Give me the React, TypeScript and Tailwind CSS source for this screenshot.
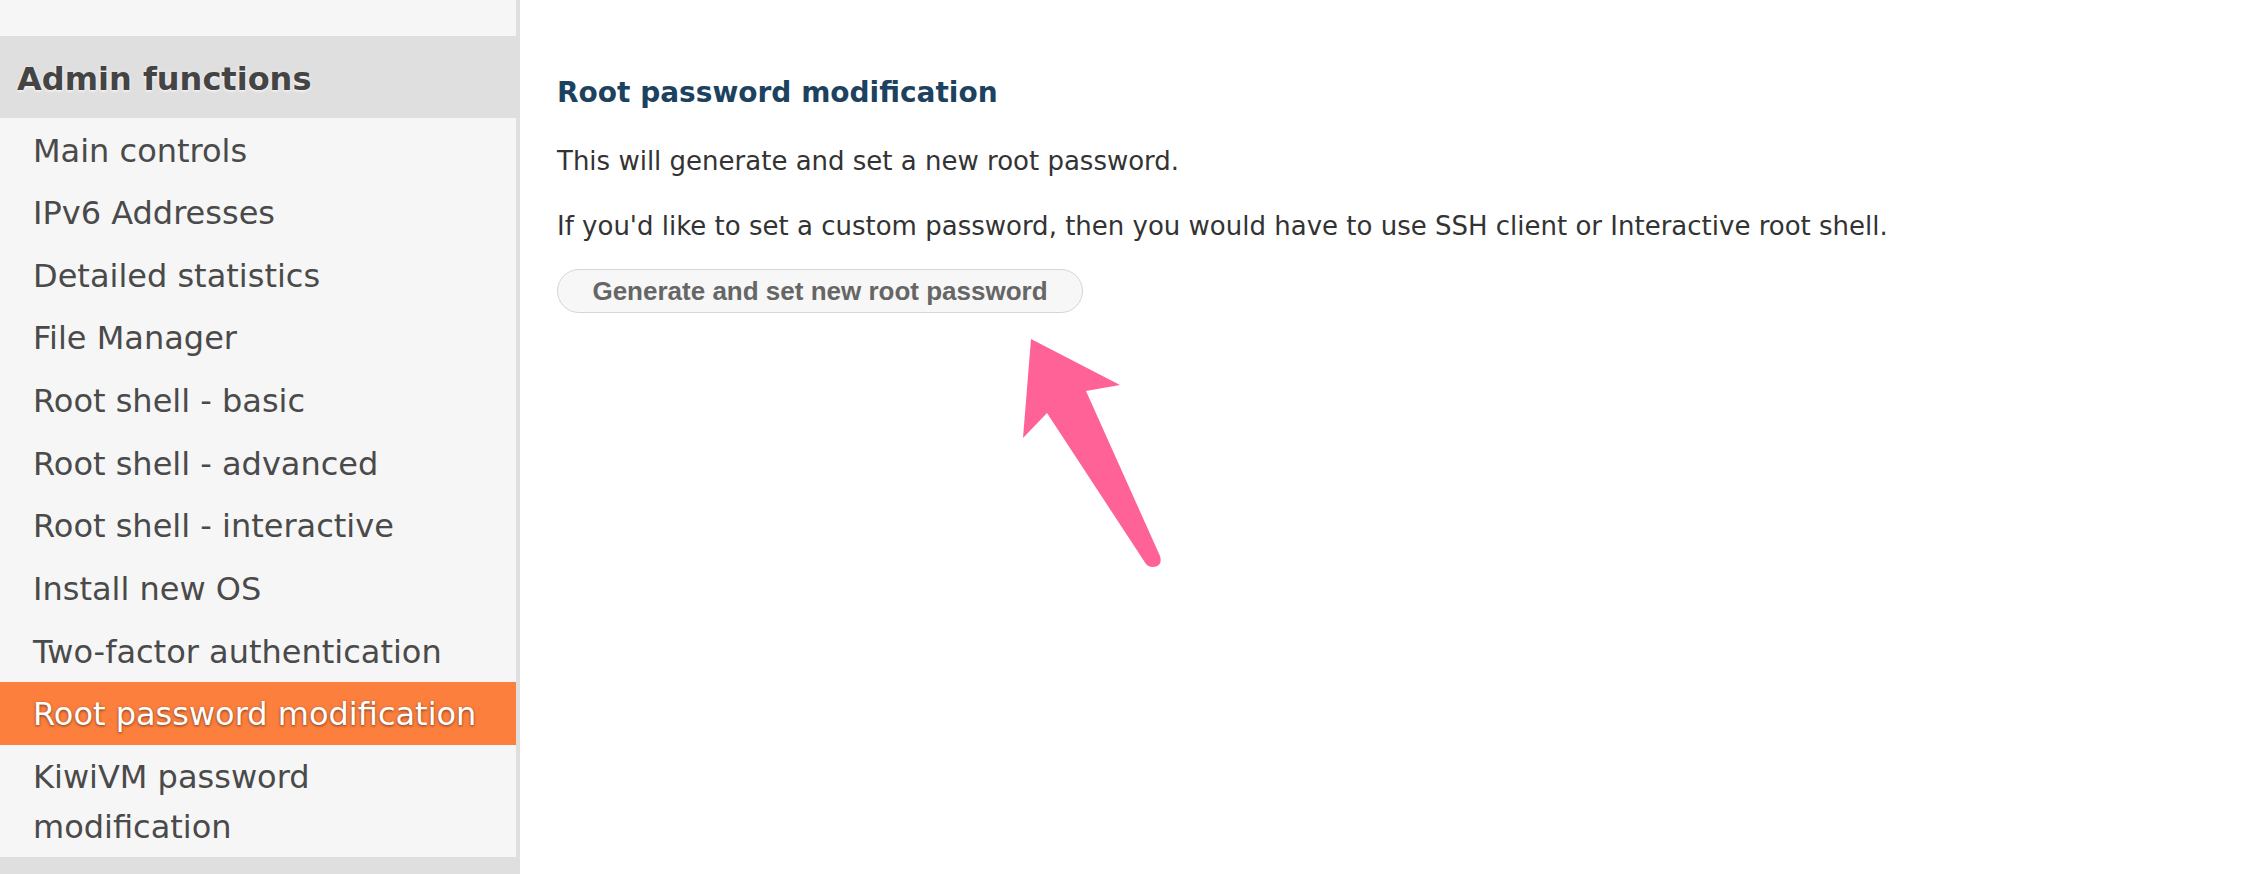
import React from 'react';

const menuItems = [
  'Main controls',
  'IPv6 Addresses',
  'Detailed statistics',
  'File Manager',
  'Root shell - basic',
  'Root shell - advanced',
  'Root shell - interactive',
  'Install new OS',
  'Two-factor authentication',
  'Root password modification',
  'KiwiVM password modification',
];

const ACTIVE = 'Root password modification';

export default function App() {
  return (
    <div className="relative flex h-[874px] w-[2252px] overflow-hidden bg-white font-['DejaVu_Sans',Verdana,sans-serif]">
      {/* Sidebar */}
      <aside className="flex w-[520px] shrink-0 flex-col bg-[#dfdfdf]">
        <div className="mr-[4px] h-[36px] bg-[#f6f6f6]" />
        <h2 className="flex h-[82px] items-center pl-[17px] pt-[3px] text-[32px] font-bold text-[#444] [text-shadow:0_1px_3px_#fff]">
          Admin functions
        </h2>
        <ul className="mr-[4px] bg-[#f6f6f6]">
          {menuItems.map((item) => (
            <li
              key={item}
              className={
                item === ACTIVE
                  ? 'bg-[#fd7f3d] pb-[5.17px] pl-[33px] pr-[16px] pt-[7.5px] text-[32px] leading-[50px] text-white [text-shadow:0_1px_3px_rgba(0,0,0,0.55)]'
                  : 'pb-[5.17px] pl-[33px] pr-[16px] pt-[7.5px] text-[32px] leading-[50px] text-[#4a4a4a]'
              }
            >
              {item}
            </li>
          ))}
        </ul>
      </aside>

      {/* Main content */}
      <main className="flex-1 pl-[37px] pt-[75px]">
        <h3 className="text-[28px] font-bold leading-[36px] text-[#1c4260]">Root password modification</h3>
        <p className="mt-[32px] text-[26px] leading-[36px] text-[#333]">This will generate and set a new root password.</p>
        <p className="mt-[28.5px] text-[26px] leading-[36px] text-[#333]">
          If you'd like to set a custom password, then you would have to use SSH client or Interactive root shell.
        </p>
        <button
          type="button"
          className="mt-[25.5px] flex h-[44px] w-[526px] items-center justify-center rounded-full border-[1.5px] border-[#d6d6d6] bg-[#f7f7f7] font-['Liberation_Sans',Arial,sans-serif] text-[26px] font-bold text-[#666]"
        >
          Generate and set new root password
        </button>
      </main>

      {/* Annotation arrow */}
      <svg className="pointer-events-none absolute inset-0" width="2252" height="874" viewBox="0 0 2252 874">
        <path
          d="M1031 339 L1120 385 L1086 391 L1160 556 Q1163 566 1153 567 Q1147 567 1144 561 L1047 413 L1023 438 Z"
          fill="#ff6297"
        />
      </svg>
    </div>
  );
}
